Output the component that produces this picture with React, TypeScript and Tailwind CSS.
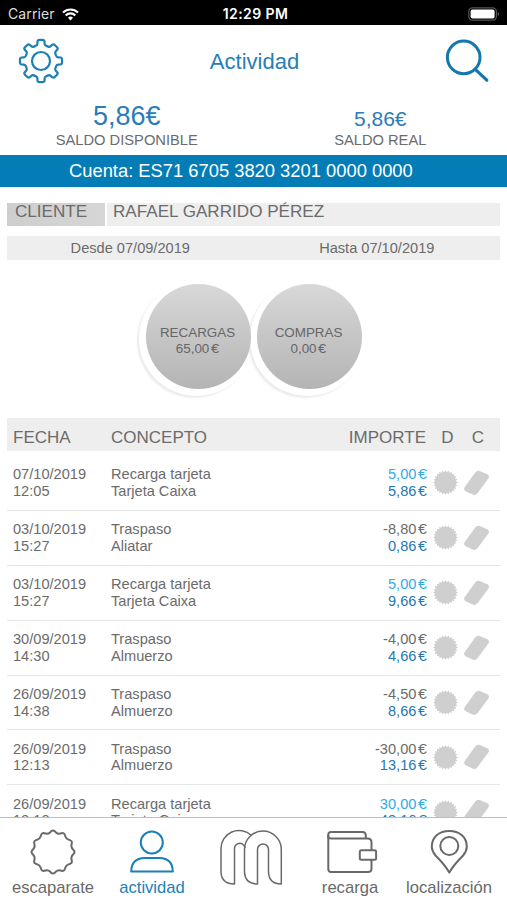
import type { ReactNode } from "react";

interface Movement {
  date: string;
  time: string;
  concept: string;
  place: string;
  amount: string;
  balance: string;
}

const movements: Movement[] = [
  { date: "07/10/2019", time: "12:05", concept: "Recarga tarjeta", place: "Tarjeta Caixa", amount: "5,00€", balance: "5,86€" },
  { date: "03/10/2019", time: "15:27", concept: "Traspaso", place: "Aliatar", amount: "-8,80€", balance: "0,86€" },
  { date: "03/10/2019", time: "15:27", concept: "Recarga tarjeta", place: "Tarjeta Caixa", amount: "5,00€", balance: "9,66€" },
  { date: "30/09/2019", time: "14:30", concept: "Traspaso", place: "Almuerzo", amount: "-4,00€", balance: "4,66€" },
  { date: "26/09/2019", time: "14:38", concept: "Traspaso", place: "Almuerzo", amount: "-4,50€", balance: "8,66€" },
  { date: "26/09/2019", time: "12:13", concept: "Traspaso", place: "Almuerzo", amount: "-30,00€", balance: "13,16€" },
  { date: "26/09/2019", time: "12:12", concept: "Recarga tarjeta", place: "Tarjeta Caixa", amount: "30,00€", balance: "43,16€" },
];

type Point = [number, number];

// closed polygon with every corner softened; t is the share of each edge used by the corner
function softPolygon(points: Point[], t: number) {
  const n = points.length;
  const mix = (a: Point, b: Point) => `${(a[0] + (b[0] - a[0]) * t).toFixed(2)} ${(a[1] + (b[1] - a[1]) * t).toFixed(2)}`;
  return points
    .map((p, i) => {
      const prev = points[(i + n - 1) % n];
      const next = points[(i + 1) % n];
      return `${i === 0 ? "M" : "L"}${mix(p, prev)}Q${p[0].toFixed(2)} ${p[1].toFixed(2)} ${mix(p, next)}`;
    })
    .join("") + "Z";
}

function polar(c: number, r: number, a: number): Point {
  return [c + r * Math.sin(a), c - r * Math.cos(a)];
}

function star(c: number, spikes: number, outer: number, inner: number): Point[] {
  return Array.from({ length: spikes * 2 }, (_, i) => polar(c, i % 2 ? inner : outer, (Math.PI * i) / spikes));
}

function gear(c: number): Point[] {
  return Array.from({ length: 8 }, (_, i) => {
    const a = (Math.PI * i) / 4;
    return [polar(c, 16.2, a - 0.23), polar(c, 21.3, a - 0.16), polar(c, 21.3, a + 0.16), polar(c, 16.2, a + 0.23)];
  }).flat();
}

const gearPath = softPolygon(gear(23), 0.3);
const sealPath = softPolygon(star(12.5, 24, 12.4, 10.4), 0.15);
const badgePath = softPolygon(star(23, 12, 22.3, 18.6), 0.38);

function StatusBar() {
  return (
    <div className="flex h-[25px] shrink-0 items-center bg-black pt-[3px] text-white font-['Inter',sans-serif]">
      <div className="flex flex-1 items-center gap-[7px] pl-[8px]">
        <span className="text-[14px] leading-[18px] tracking-[0.1px] text-[#dedede]">Carrier</span>
        <svg width="17" height="13" viewBox="0 0 17 13" fill="none" stroke="#fff" strokeWidth="2.1">
          <path d="M1 4.6A10.7 10.7 0 0 1 16 4.6" />
          <path d="M3.7 7.4A6.8 6.8 0 0 1 13.3 7.4" />
          <path d="M8.5 12.4L6 9.7A3.7 3.7 0 0 1 11 9.7Z" fill="#fff" stroke="none" />
        </svg>
      </div>
      <span className="pl-[3px] text-[14px] font-semibold leading-[18px] tracking-[0.4px]">12:29 PM</span>
      <div className="flex flex-1 justify-end pr-[7px]">
        <svg width="32" height="14" viewBox="0 0 32 14">
          <rect x="0.8" y="0.8" width="27.6" height="12.4" rx="3.6" fill="none" stroke="#555" strokeWidth="1.2" />
          <rect x="2.6" y="2.6" width="24" height="8.8" rx="2" fill="#fff" />
          <path d="M29.8 5v4q1.3-.6 1.3-2t-1.3-2z" fill="#666" />
        </svg>
      </div>
    </div>
  );
}

function Header() {
  return (
    <header className="flex h-[71px] shrink-0 items-center justify-between pl-[18px] pr-[16px]">
      <svg width="46" height="46" viewBox="0 0 46 46" fill="none" stroke="#1c80b4" strokeWidth="2.2" strokeLinejoin="round">
        <path d={gearPath} />
        <circle cx="23" cy="23" r="9" />
      </svg>
      <h1 className="pt-[3px] text-[22px] leading-[28px] text-[#2580b5]">Actividad</h1>
      <svg width="46" height="46" viewBox="0 0 46 46" fill="none" stroke="#1578ad" strokeLinecap="round">
        <circle cx="18.7" cy="19.4" r="16.3" strokeWidth="3" />
        <path d="M30.3 31.4L41.8 42.2" strokeWidth="3.2" />
      </svg>
    </header>
  );
}

function Balances() {
  return (
    <div className="grid h-[59px] shrink-0 grid-cols-2 items-end pb-[7px] text-center">
      <div>
        <p className="mb-[2px] text-[27px] leading-[28px] text-[#2a7db8]">5,86€</p>
        <p className="text-[14.7px] leading-[16px]">SALDO DISPONIBLE</p>
      </div>
      <div>
        <p className="mb-px text-[21px] leading-[24px] text-[#2a7db8]">5,86€</p>
        <p className="text-[14.7px] leading-[16px]">SALDO REAL</p>
      </div>
    </div>
  );
}

// figure with its euro sign set slightly apart
function Euros({ value }: { value: string }) {
  return (
    <>
      {value.slice(0, -1)}
      <span className="ml-[1.5px] inline-block origin-left scale-x-110 pr-[1px]">€</span>
    </>
  );
}

function TotalCircle({ label, value }: { label: string; value: string }) {
  return (
    <div className="flex size-[105px] flex-col items-center justify-center rounded-full bg-linear-to-b from-[#d8d8d8] to-[#b4b4b4] pr-[2px] pt-[8px] text-[13.4px] leading-[15.5px] text-[#666]">
      <span>{label}</span>
      <span>
        <Euros value={value} />
      </span>
    </div>
  );
}

// white rim with a faint shade towards the lower left
function Rim() {
  return <div className="size-[105px] rounded-full shadow-[-2px_2px_0_5px_#fff,-4px_4px_2px_5px_#ececec]" />;
}

function MovementRow({ item }: { item: Movement }) {
  const isCharge = item.amount.startsWith("-");
  return (
    <div className="flex h-[54.9px] shrink-0 items-center border-b border-[#e6e6e6] pl-[6px] text-[14.6px] leading-[16.7px]">
      <div className="w-[98px]">
        <p>{item.date}</p>
        <p>{item.time}</p>
      </div>
      <div className="flex-1">
        <p>{item.concept}</p>
        <p>{item.place}</p>
      </div>
      <div className="text-right">
        <p className={isCharge ? "" : "text-[#2fabe6]"}>
          <Euros value={item.amount} />
        </p>
        <p className="text-[#2478b3]">
          <Euros value={item.balance} />
        </p>
      </div>
      <svg className="ml-[6px]" width="26" height="25" viewBox="0 0 26 25" fill="#cfcfcf">
        <path d={sealPath} />
      </svg>
      <svg className="ml-[4px] mr-[10px]" width="27" height="26" viewBox="0 0 27 26" fill="#cfcfcf">
        <path d="M12.2 2.6Q14.3 0 17.3 1.2L24.3 4.3Q27.2 6 25.2 8.8L14.7 22.9Q12.4 25.8 9.5 24.5L2.8 21.3Q-.1 19.6 1.9 16.8Z" />
      </svg>
    </div>
  );
}

function Tab({ label, active, children }: { label?: string; active?: boolean; children: ReactNode }) {
  return (
    <div className={`flex flex-1 flex-col items-center ${active ? "text-[#1b80b8]" : "text-[#696969]"}`}>
      <svg
        width="64"
        height={label ? 48 : 58}
        viewBox={label ? "0 0 64 48" : "0 0 64 58"}
        fill="none"
        stroke="currentColor"
        strokeWidth="2"
        strokeLinejoin="round"
      >
        {children}
      </svg>
      {label && <span className="whitespace-nowrap text-[16.6px] leading-[21px]">{label}</span>}
    </div>
  );
}

function TabBar() {
  return (
    <nav className="flex h-[83px] shrink-0 border-t border-[#bdbdbd] bg-white pl-[3.5px] pr-[8.5px] pt-[11px]">
      <Tab label="escaparate">
        <path d={badgePath} transform="translate(9 0)" />
      </Tab>
      <Tab label="actividad" active>
        <circle cx="31.8" cy="13.5" r="11" />
        <path d="M11.2 42.5Q11.5 29.3 24.5 29H39.5Q52.5 29.3 52.8 42.5Z" />
      </Tab>
      <Tab>
        <g strokeWidth="1.5">
          <path d="M32.5 6.5A18 18 0 0 0 2 20V43Q2.5 55 15.5 55V20.5A5.3 5.3 0 0 1 26 18.8" />
          <path d="M38.5 55Q26 55 25.5 43V20.5A18.4 18.4 0 0 1 62.3 20.5V55Q50 55 49.5 43V20.5A5.5 5.5 0 0 0 38.5 20.5Z" />
        </g>
      </Tab>
      <Tab label="recarga">
        <path d="M10.3 9.5V5.5Q10.3 3 13 3H44.5Q47.5 3 47.8 6V9.5" />
        <path d="M10.3 7.5Q10.5 9.5 13 9.5H49.5Q53.5 9.5 53.5 13.5V21.3M53.5 30.8V39.5Q53.5 43 50 43H13Q10.3 43 10.3 40V6" />
        <rect x="41.8" y="21.3" width="16.3" height="9.5" rx="1.5" />
      </Tab>
      <Tab label="localización">
        <path d="M32.3 43.5Q28 36 18.5 26.5Q14.8 22 14.8 17.5C15 7.5 22.5 2 32.3 2S49.6 7.5 49.8 17.5Q49.8 22 46.1 26.5Q36.6 36 32.3 43.5Z" />
        <circle cx="32.3" cy="17" r="9" />
      </Tab>
    </nav>
  );
}

export default function App() {
  return (
    <div className="flex h-[900px] w-[507px] flex-col overflow-hidden bg-white text-[#6b6b6b] font-['Liberation_Sans',Arial,sans-serif]">
      <StatusBar />
      <Header />
      <Balances />
      <div className="h-[32px] shrink-0 bg-[#047db7] pl-[69px] text-[18.35px] leading-[32px] text-white">
        Cuenta: ES71 6705 3820 3201 0000 0000
      </div>

      <main className="flex min-h-0 flex-1 flex-col overflow-hidden px-[7px] pt-[16px]">
        <div className="flex h-[23px] shrink-0 gap-[2px] text-[17.1px] leading-[18px]">
          <div className="w-[98px] bg-linear-to-r from-[#cecece] to-[#d6d6d6] pl-[8px]">CLIENTE</div>
          <div className="flex-1 bg-[#eee] pl-[6px]">RAFAEL GARRIDO PÉREZ</div>
        </div>
        <div className="mt-[10px] grid h-[24px] shrink-0 grid-cols-2 bg-[#eee] text-center text-[14.6px] leading-[24px]">
          <span>Desde 07/09/2019</span>
          <span>Hasta 07/10/2019</span>
        </div>

        <div className="mt-[24px] grid shrink-0 justify-center pl-[1px]">
          <div className="col-start-1 row-start-1 flex gap-[6px]">
            <Rim />
            <Rim />
          </div>
          <div className="z-10 col-start-1 row-start-1 flex gap-[6px]">
            <TotalCircle label="RECARGAS" value="65,00€" />
            <TotalCircle label="COMPRAS" value="0,00€" />
          </div>
        </div>

        <div className="mb-[5px] mt-[29px] flex h-[33px] shrink-0 items-center bg-[#eee] pl-[6px] pt-[6px] text-[17px]">
          <span className="w-[98px]">FECHA</span>
          <span className="flex-1">CONCEPTO</span>
          <span>IMPORTE</span>
          <span className="w-[43px] text-center">D</span>
          <span className="mr-[13px] w-[18px] text-center">C</span>
        </div>
        {movements.map((item, i) => (
          <MovementRow key={i} item={item} />
        ))}
      </main>

      <TabBar />
    </div>
  );
}
